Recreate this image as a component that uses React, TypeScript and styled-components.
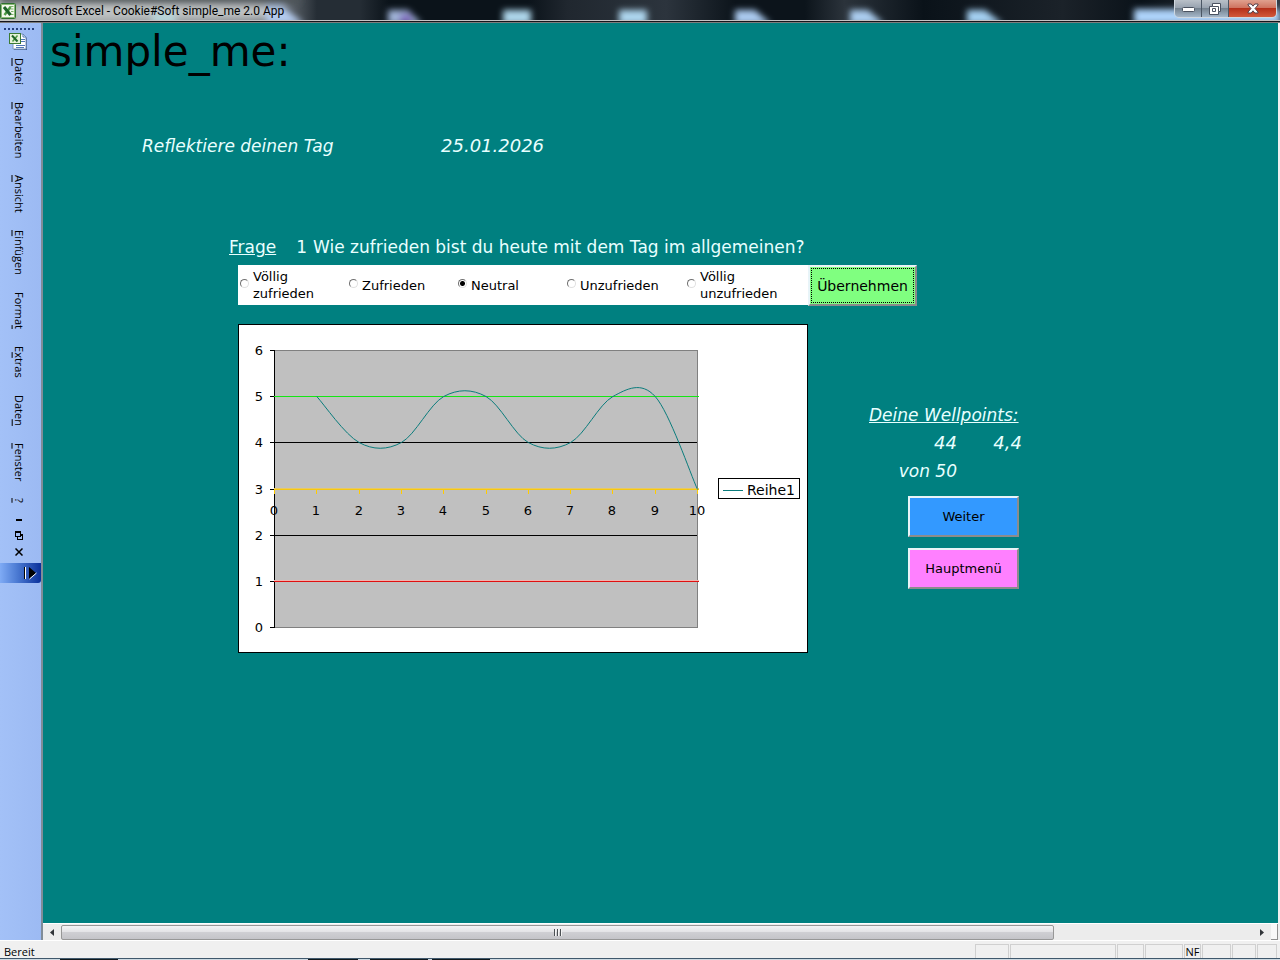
import React from "react";
import styled, { createGlobalStyle } from "styled-components";

const uiFont = `"Segoe UI", "Open Sans", "Noto Sans", sans-serif`;
const sheetFont = `Verdana, "DejaVu Sans", sans-serif`;

const GlobalStyle = createGlobalStyle`
  * { box-sizing: border-box; }
  body { margin: 0; background: #f0f0f0; }
  button { margin: 0; padding: 0; border: 0; background: none; color: inherit; font: inherit; }
`;

const Window = styled.div`
  display: flex;
  flex-direction: column;
  min-height: 100vh;
  font-family: ${uiFont};
  font-size: 12px;
  color: #000;
`;

/* ---------- Title bar ---------- */

const TitleBar = styled.header`
  position: relative;
  display: flex;
  align-items: flex-start;
  height: 23px;
  overflow: hidden;
  background: #0c141b;
  border-bottom: 1px solid #7d7d7d;
`;

const Glass = styled.svg`
  position: absolute;
  inset: 0;
  width: 100%;
  height: 22px;
`;

const Caption = styled.h1`
  position: relative;
  display: flex;
  align-items: center;
  gap: 5px;
  flex: 1;
  margin: 0;
  height: 22px;
  font-family: "Segoe UI", Roboto, sans-serif;
  font-size: 12px;
  font-weight: 400;
  white-space: nowrap;
`;

const WindowButtons = styled.div`
  position: relative;
  display: flex;
  height: 18px;
  margin-right: 3px;
  border: 1px solid #d0d8e0;
  border-top: 0;
  border-radius: 0 0 5px 5px;
  overflow: hidden;
`;

const WindowButton = styled.button<{ $close?: boolean }>`
  display: flex;
  align-items: center;
  justify-content: center;
  width: ${(p) => (p.$close ? 47 : 27)}px;
  height: 17px;
  border-right: ${(p) => (p.$close ? 0 : 1)}px solid #4a5664;
  background: ${(p) =>
    p.$close
      ? "linear-gradient(#e0a08e 0, #cf7460 45%, #b5301a 50%, #d2593c 100%)"
      : "linear-gradient(#b9c0c8 0, #98a3b0 45%, #74828f 50%, #a4b6c8 100%)"};
`;

/* ---------- Menu column ---------- */

const Body = styled.div`
  display: flex;
  flex: 1;
`;

const MenuColumn = styled.nav`
  display: flex;
  flex-direction: column;
  align-items: center;
  width: 43px;
  padding: 5px 4px 0 0;
  background: linear-gradient(90deg, #a3c1f7, #9cbaf3);
  border-right: 2px solid #808c98;
`;

const Grip = styled.div`
  width: 31px;
  height: 2px;
  margin: 0 0 3px 1px;
  background: repeating-linear-gradient(90deg, #27417e 0 2px, transparent 2px 4px);
`;

const MenuList = styled.div`
  display: flex;
  flex-direction: column;
  align-items: center;
  gap: 17px;
  margin-top: 7px;
`;

const MenuItem = styled.button`
  writing-mode: vertical-rl;
  line-height: 16px;
  font-size: 11px;
`;

const BookControls = styled.div`
  display: flex;
  flex-direction: column;
  align-items: center;
  margin-top: 9px;
`;

const BookButton = styled.button`
  display: flex;
  align-items: center;
  justify-content: center;
  width: 16px;
  height: 16px;
`;

const Expander = styled.button`
  display: flex;
  align-items: center;
  justify-content: flex-end;
  align-self: stretch;
  height: 20px;
  margin: 3px -4px 0 0;
  padding-right: 4px;
  border-radius: 0 0 3px 0;
  background: linear-gradient(90deg, #7fabf5, #4d7cd4 40%, #0a309a);
`;

/* ---------- Worksheet ---------- */

const Workspace = styled.div`
  display: flex;
  flex-direction: column;
  flex: 1;
  min-width: 0;
  padding-right: 2px;
`;

const Sheet = styled.main`
  flex: 1;
  overflow: hidden;
  padding: 1px 0 0 7px;
  background: #008080;
  color: #e8ffff;
  font-family: ${sheetFont};
  font-size: 16px;
  line-height: 20px;
`;

const Brand = styled.h2`
  margin: 0;
  color: #000;
  font-size: 42px;
  line-height: 56px;
  font-weight: 400;
`;

const Handwriting = styled.p<{ $underline?: boolean; $figures?: boolean }>`
  margin: 0;
  font-style: italic;
  font-size: ${(p) => (p.$figures ? 18 : 17)}px;
  line-height: 28px;
  white-space: nowrap;
  text-decoration: ${(p) => (p.$underline ? "underline" : "none")};
`;

const DayRow = styled.div`
  display: grid;
  grid-template-columns: 299px auto;
  margin: 52px 0 0 92px;
`;

const QuestionRow = styled.div`
  display: grid;
  grid-template-columns: 45px 33px auto;
  margin: 77px 0 0 179px;
  font-size: 17px;
  white-space: nowrap;
`;

const QuestionLabel = styled.span`
  text-decoration: underline;
`;

const QuestionNumber = styled.span`
  text-align: right;
`;

const QuestionText = styled.span`
  padding-left: 6px;
`;

const AnswerForm = styled.form`
  display: flex;
  margin: 8px 0 0 188px;
`;

const Answers = styled.fieldset`
  display: grid;
  grid-template-columns: 109px 109px 109px 120px 123px;
  align-items: center;
  height: 40px;
  margin: 0;
  padding: 0;
  border: 0;
  background: #fff;
  color: #000;
`;

const Answer = styled.label`
  display: flex;
  align-items: center;
  gap: 4px;
  padding-left: 2px;
  font-size: 13px;
  line-height: 17px;
`;

const AnswerText = styled.span`
  white-space: pre-line;
`;

const Radio = styled.input`
  appearance: none;
  flex: none;
  width: 9px;
  height: 9px;
  margin: 0 0 3px;
  border: 1px solid;
  border-color: #707070 #e0e0e0 #e0e0e0 #707070;
  border-radius: 50%;
  background: #fff;
  &:checked {
    background: radial-gradient(circle, #000 0 2px, #fff 3px);
  }
`;

const SheetButton = styled.button<{ $color: string; $wide?: boolean }>`
  width: ${(p) => (p.$wide ? 109 : 111)}px;
  height: 41px;
  border: 2px solid;
  border-color: #e8f4f8 #8c8c8c #8c8c8c #e8f4f8;
  background: ${(p) => p.$color};
  color: #000;
  font-size: ${(p) => (p.$wide ? 14 : 13)}px;
  outline: ${(p) => (p.$wide ? "1px dotted #000" : "none")};
  outline-offset: -4px;
`;

const ResultRow = styled.div`
  display: flex;
  align-items: flex-start;
  gap: 61px;
  margin: 18px 0 0 188px;
`;

const Wellpoints = styled.section`
  padding-top: 77px;
  width: 154px;
`;

const Scores = styled.div`
  display: grid;
  grid-template-columns: 88px 65px;
  text-align: right;
`;

const Actions = styled.div`
  display: flex;
  flex-direction: column;
  gap: 11px;
  margin: 11px 0 0 39px;
`;

/* ---------- Scroll bar and status bar ---------- */

const ScrollBar = styled.div`
  display: flex;
  align-items: center;
  height: 17px;
  background: #ececec;
  border-top: 1px solid #fff;
`;

const ScrollArrow = styled.button`
  display: flex;
  align-items: center;
  justify-content: center;
  width: 18px;
  height: 16px;
`;

const ScrollTrack = styled.div`
  display: grid;
  grid-template-columns: 5fr 1fr;
  flex: 1;
  height: 15px;
`;

const ScrollThumb = styled.div`
  display: flex;
  align-items: center;
  justify-content: center;
  gap: 1px;
  height: 15px;
  border: 1px solid #979797;
  border-radius: 2px;
  background: linear-gradient(#f4f4f5, #e3e3e6 45%, #cfcfd3 50%, #c4c4c9);
`;

const ThumbLine = styled.span`
  width: 2px;
  height: 7px;
  border-left: 1px solid #4c5054;
  background: #f4f4f4;
`;

const Splitter = styled.div`
  width: 7px;
  height: 16px;
  border: 1px solid #909090;
  border-width: 0 1px 1px 0;
  background: #f8f8f8;
`;

const StatusBar = styled.footer`
  display: flex;
  height: 18px;
  padding: 3px 2px 0 4px;
  background: #f0f0f0;
  border-top: 1px solid #fff;
  font-size: 11px;
  line-height: 16px;
`;

const StatusText = styled.span`
  flex: 1;
`;

const StatusCell = styled.span<{ $width: number }>`
  width: ${(p) => p.$width}px;
  margin-right: 1px;
  border: 1px solid #d0d0d0;
  border-bottom: 0;
  text-align: center;
  line-height: 14px;
`;

const Taskbar = styled.div`
  height: 2px;
  border-top: 1px solid #40586c;
  background: linear-gradient(
    90deg,
    #cddae2 0 60px, #10181c 60px 118px,
    #cddae2 118px 308px, #10181c 308px 358px,
    #cddae2 358px 370px, #10181c 370px 428px,
    #cddae2 428px 432px, #10181c 432px 490px,
    #cddae2 490px
  );
`;

/* ---------- Chart ---------- */

const series = [5, 4, 4, 5, 5, 4, 4, 5, 5, 3];
const plot = { left: 36, top: 26, width: 423, height: 277 };
const px = (v: number) => plot.left + (v * plot.width) / 10;
const py = (v: number) => Math.round(plot.top + ((6 - v) * plot.height) / 6);

function smoothPath(values: number[]) {
  const pts = values.map((v, i) => [px(i + 1) + 0.5, py(v) + 0.5]);
  const at = (i: number) => pts[Math.max(0, Math.min(pts.length - 1, i))];
  let d = `M${pts[0][0]} ${pts[0][1]}`;
  for (let i = 0; i < pts.length - 1; i++) {
    const [a, b, c, e] = [at(i - 1), at(i), at(i + 1), at(i + 2)];
    d += ` C${b[0] + (c[0] - a[0]) / 6} ${b[1] + (c[1] - a[1]) / 6} ${c[0] - (e[0] - b[0]) / 6} ${
      c[1] - (e[1] - b[1]) / 6
    } ${c[0]} ${c[1]}`;
  }
  return d;
}

const ChartSvg = styled.svg`
  display: block;
  flex: none;
  font-family: ${sheetFont};
  font-size: 13px;
`;

function Chart() {
  const right = plot.left + plot.width;
  const bottom = plot.top + plot.height;
  return (
    <ChartSvg width="570" height="329" viewBox="0 0 570 329" role="img" aria-label="Wellpoints Reihe1">
      <g shapeRendering="crispEdges">
        <rect x="0.5" y="0.5" width="569" height="328" fill="#fff" stroke="#000" />
        <rect x={plot.left + 0.5} y={plot.top + 0.5} width={plot.width} height={plot.height} fill="#c0c0c0" stroke="#808080" />
        <rect x={plot.left} y={plot.top} width="1" height={plot.height + 1} />
        {[0, 1, 2, 3, 4, 5, 6].map((v) => (
          <rect key={v} x={plot.left - 4} y={py(v)} width="4" height="1" />
        ))}
        <rect x={plot.left} y={py(4)} width={plot.width} height="1" />
        <rect x={plot.left} y={py(2)} width={plot.width} height="1" />
        <rect x={plot.left} y={py(5)} width={plot.width + 2} height="1" fill="#14e614" />
        <rect x={plot.left} y={py(1) - 1} width={plot.width + 2} height="1" fill="#f0b4ae" />
        <rect x={plot.left} y={py(1)} width={plot.width + 2} height="1" fill="#e01010" />
        <rect x={plot.left} y={py(3) - 1} width={plot.width + 2} height="1" fill="#e8c864" />
        <rect x={plot.left} y={py(3)} width={plot.width + 2} height="1" fill="#f6c810" />
        {Array.from({ length: 11 }, (_, i) => (
          <rect key={i} x={Math.round(px(i))} y={py(3)} width="1" height="5" fill="#ffcc00" />
        ))}
      </g>
      <path d={smoothPath(series)} fill="none" stroke="#0a7c7c" />
      {[0, 1, 2, 3, 4, 5, 6].map((v) => (
        <text key={v} x="25" y={py(v) + 5} textAnchor="end">{v}</text>
      ))}
      {Array.from({ length: 11 }, (_, i) => (
        <text key={i} x={Math.round(px(i))} y="191" textAnchor="middle">{i}</text>
      ))}
      <rect x={right + 21.5} y={bottom - 148.5} width="81" height="20" fill="#fff" stroke="#000" shapeRendering="crispEdges" />
      <rect x="485" y="166" width="20" height="1" fill="#0a7c7c" />
      <text x="509" y="171" fontSize="14">Reihe1</text>
    </ChartSvg>
  );
}

/* ---------- Drawings ---------- */

const ExcelIcon = () => (
  <svg width="16" height="16" viewBox="0 0 16 16">
    <rect x="0.5" y="0.5" width="15" height="15" rx="1" fill="#f4f9ee" stroke="#2f7030" />
    <rect x="1.500" y="1.500" width="13" height="13" fill="none" stroke="#8cba78" />
    <path d="M9.500 3.500h4M10.500 6h3M11 8.500h2.500M10 11.500h3.500" stroke="#7fb46c" />
    <path d="M10.500 4L4.500 12" stroke="#4f9b46" strokeWidth="2.500" />
    <path d="M4 4l6.500 8" stroke="#1f6428" strokeWidth="3" />
  </svg>
);

const WorkbookIcon = () => (
  <svg width="19" height="18" viewBox="0 0 19 18">
    <path d="M8 2h7l3 3v12H5V8z" fill="#3f5f94" />
    <path d="M7 1h7l3 3v12H4V7z" fill="#fff" stroke="#7c96bc" />
    <path d="M14 1v3h3M12 6.500h4M12 8.500h4M7 12.500h9M7 14.500h8" fill="none" stroke="#4f78b6" />
    <rect x="0.500" y="0.500" width="11" height="10" fill="#e6f2da" stroke="#3c7b34" />
    <path d="M8.500 2.500L3.500 8.500" stroke="#4f9b46" strokeWidth="1.500" />
    <path d="M3 2.500l5.500 6" stroke="#1f6428" strokeWidth="2" />
  </svg>
);

function GlassBackdrop() {
  return (
    <Glass viewBox="0 0 1280 22" preserveAspectRatio="none" aria-hidden="true">
      <defs>
        <filter id="soft" x="-50%" y="-50%" width="200%" height="200%">
          <feGaussianBlur stdDeviation="3" />
        </filter>
        <linearGradient id="haze">
          <stop offset="0" stopColor="#b4b8b6" />
          <stop offset="0.75" stopColor="#8c9094" />
          <stop offset="0.86" stopColor="#6a7076" />
          <stop offset="0.96" stopColor="#252d35" />
          <stop offset="1" stopColor="#252d35" />
        </linearGradient>
        <linearGradient id="stripes">
          <stop offset="0" stopColor="#252d35" />
          <stop offset="0.07" stopColor="#252d35" />
          <stop offset="0.1" stopColor="#0b131a" />
          <stop offset="0.24" stopColor="#0b131a" />
          <stop offset="0.28" stopColor="#20272f" />
          <stop offset="0.38" stopColor="#2c343d" />
          <stop offset="0.45" stopColor="#0c141b" />
          <stop offset="0.52" stopColor="#0c141b" />
          <stop offset="0.56" stopColor="#2b333b" />
          <stop offset="0.64" stopColor="#0a1219" />
          <stop offset="0.78" stopColor="#1b2229" />
          <stop offset="0.86" stopColor="#0a1219" />
          <stop offset="1" stopColor="#333b45" />
        </linearGradient>
      </defs>
      <rect x="290" width="990" height="22" fill="url(#stripes)" />
      <rect width="330" height="22" fill="url(#haze)" />
      <g filter="url(#soft)">
        <rect x="0" y="-4" width="300" height="7" fill="#4c5257" />
        <rect x="18" y="6" width="266" height="12" fill="#bfc3c4" />
        <rect x="152" y="12" width="24" height="12" fill="#b8d4d8" />
        <path d="M266 6h16l22 18h-38z" fill="#b4cbee" />
        <path d="M388 10h20l14 14h-34z" fill="#a0b4d8" />
        <rect x="400" y="14" width="12" height="10" fill="#8270c0" />
        <rect x="503" y="10" width="28" height="14" fill="#add6ea" />
        <rect x="619" y="10" width="28" height="14" fill="#add6ee" />
        <path d="M735 10h20l16 14h-36z" fill="#abcbf0" />
        <path d="M850 10h18l16 14h-34z" fill="#abcdf0" />
        <path d="M967 10h18l18 14h-36z" fill="#a4d0f2" />
        <path d="M1134 9h146v15h-146z" fill="#add3fa" />
      </g>
      <rect y="20" width="1280" height="1" fill="#c4c4c4" />
      <rect y="21" width="1280" height="1" fill="#15151c" />
    </Glass>
  );
}

/* Each entry holds the text before, at and after the access key. */
const menu: [string, string, string][] = [
  ["", "D", "atei"],
  ["", "B", "earbeiten"],
  ["", "A", "nsicht"],
  ["", "E", "infügen"],
  ["Forma", "t", ""],
  ["E", "x", "tras"],
  ["Date", "n", ""],
  ["", "F", "enster"],
  ["", "?", ""],
];

const answers = ["Völlig\nzufrieden", "Zufrieden", "Neutral", "Unzufrieden", "Völlig\nunzufrieden"];

export default function App() {
  return (
    <Window>
      <GlobalStyle />
      <TitleBar>
        <GlassBackdrop />
        <Caption>
          <ExcelIcon />
          Microsoft Excel - Cookie#Soft simple_me 2.0 App
        </Caption>
        <WindowButtons>
          <WindowButton aria-label="Minimieren">
            <svg width="13" height="6" viewBox="0 0 13 6">
              <rect x="0.5" y="1.5" width="12" height="4" rx="1" fill="#fff" stroke="#4a5260" />
            </svg>
          </WindowButton>
          <WindowButton aria-label="Wiederherstellen">
            <svg width="12" height="12" viewBox="0 0 12 12">
              <path d="M3.5 0.5h8v8h-2v3h-9v-8h3z" fill="#fff" stroke="#4a5260" />
              <path d="M3.5 5.5h3v3h-3zM3.5 3.5h6v5" fill="none" stroke="#4a5260" />
            </svg>
          </WindowButton>
          <WindowButton $close aria-label="Schließen">
            <svg width="12" height="11" viewBox="0 0 12 11">
              <path
                d="M1 1h3.200l1.800 2.200L7.800 1H11v1L8 5.500 11 9v1H7.800L6 7.800 4.200 10H1V9l3-3.500L1 2z"
                fill="#fff"
                stroke="#54404a"
              />
            </svg>
          </WindowButton>
        </WindowButtons>
      </TitleBar>

      <Body>
        <MenuColumn>
          <Grip />
          <WorkbookIcon />
          <MenuList>
            {menu.map(([before, key, after]) => (
              <MenuItem key={before + key + after}>
                {before}
                <u>{key}</u>
                {after}
              </MenuItem>
            ))}
          </MenuList>
          <BookControls>
            <BookButton aria-label="Mappe minimieren">
              <svg width="6" height="2"><rect width="6" height="2" /></svg>
            </BookButton>
            <BookButton aria-label="Mappe wiederherstellen">
              <svg width="8" height="9" viewBox="0 0 8 9" shapeRendering="crispEdges">
                <path d="M0.500 0.500h5v5h-5zM0 1.500h6M2.500 5.500v3h5v-5h-2M5 4.500h3" fill="none" stroke="#000" />
              </svg>
            </BookButton>
            <BookButton aria-label="Mappe schließen">
              <svg width="8" height="8" viewBox="0 0 8 8">
                <path d="M0.500 0.500l7 7M7.500 0.500l-7 7" stroke="#000" strokeWidth="1.500" />
              </svg>
            </BookButton>
          </BookControls>
          <Expander aria-label="Weitere Befehle">
            <svg width="14" height="14" viewBox="0 0 14 14">
              <path d="M1 1h1v12H1z" fill="#000" />
              <path d="M2 1h1v12H2z" fill="#fff" />
              <path d="M6 1l7 6-7 6z" fill="#000" />
              <path d="M6.500 13l7-6" stroke="#fff" />
            </svg>
          </Expander>
        </MenuColumn>

        <Workspace>
          <Sheet>
            <Brand>simple_me:</Brand>
            <DayRow>
              <Handwriting>Reflektiere deinen Tag</Handwriting>
              <Handwriting $figures>25.01.2026</Handwriting>
            </DayRow>
            <QuestionRow>
              <QuestionLabel>Frage</QuestionLabel>
              <QuestionNumber>1</QuestionNumber>
              <QuestionText>Wie zufrieden bist du heute mit dem Tag im allgemeinen?</QuestionText>
            </QuestionRow>
            <AnswerForm onSubmit={(e) => e.preventDefault()}>
              <Answers aria-label="Antwort">
                {answers.map((text) => (
                  <Answer key={text}>
                    <Radio type="radio" name="answer" defaultChecked={text === "Neutral"} />
                    <AnswerText>{text}</AnswerText>
                  </Answer>
                ))}
              </Answers>
              <SheetButton type="submit" $wide $color="#80ff80">Übernehmen</SheetButton>
            </AnswerForm>
            <ResultRow>
              <Chart />
              <Wellpoints>
                <Handwriting $underline>Deine Wellpoints:</Handwriting>
                <Scores>
                  <Handwriting $figures>44</Handwriting>
                  <Handwriting $figures>4,4</Handwriting>
                  <Handwriting>von 50</Handwriting>
                </Scores>
                <Actions>
                  <SheetButton type="button" $color="#3399ff">Weiter</SheetButton>
                  <SheetButton type="button" $color="#ff80ff">Hauptmenü</SheetButton>
                </Actions>
              </Wellpoints>
            </ResultRow>
          </Sheet>
          <ScrollBar>
            <ScrollArrow aria-label="Nach links">
              <svg width="4" height="7"><path d="M4 0v7L0 3.500z" fill="#303438" /></svg>
            </ScrollArrow>
            <ScrollTrack>
              <ScrollThumb>
                <ThumbLine />
                <ThumbLine />
                <ThumbLine />
              </ScrollThumb>
            </ScrollTrack>
            <ScrollArrow aria-label="Nach rechts">
              <svg width="4" height="7"><path d="M0 0v7l4-3.500z" fill="#303438" /></svg>
            </ScrollArrow>
            <Splitter />
          </ScrollBar>
        </Workspace>
      </Body>

      <StatusBar>
        <StatusText>Bereit</StatusText>
        <StatusCell $width={34} />
        <StatusCell $width={106} />
        <StatusCell $width={27} />
        <StatusCell $width={38} />
        <StatusCell $width={17}>NF</StatusCell>
        <StatusCell $width={29} />
        <StatusCell $width={24} />
        <StatusCell $width={20} />
      </StatusBar>
      <Taskbar />
    </Window>
  );
}
